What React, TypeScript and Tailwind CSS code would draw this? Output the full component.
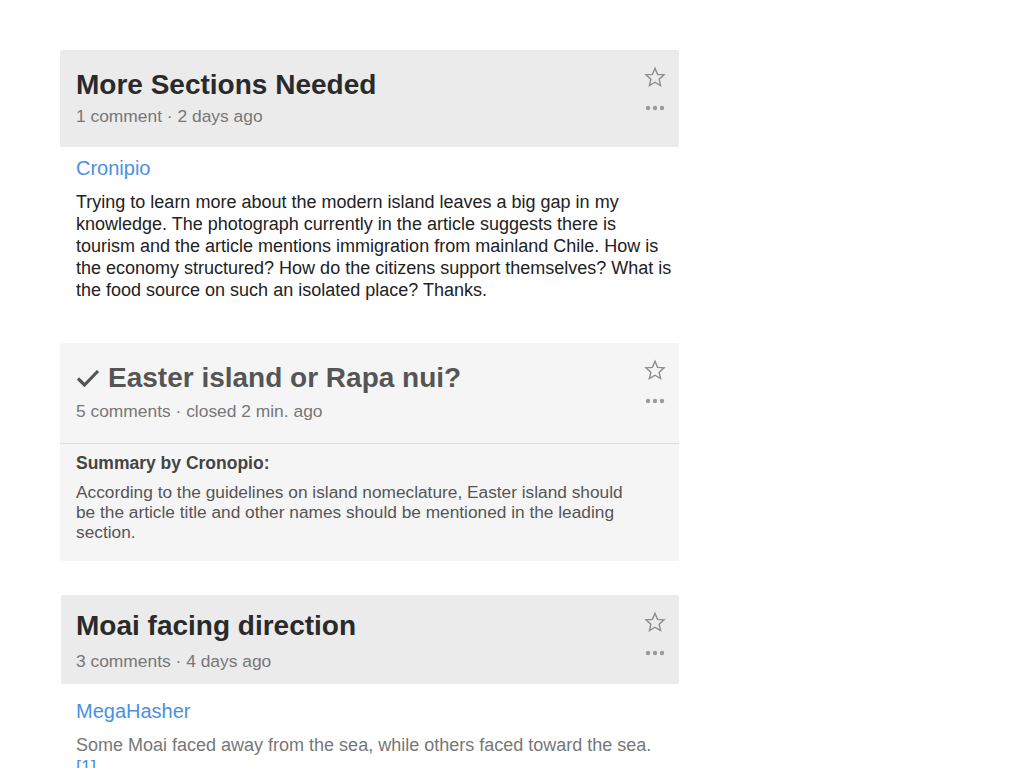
import React from 'react';

function Star() {
  return (
    <svg width="22" height="22" viewBox="0 0 24 24" fill="none" stroke="#8c8c8c" strokeWidth="1.5" strokeLinejoin="miter">
      <path d="M12 2.5l2.8 6.6 7.1.6-5.4 4.7 1.6 7-6.1-3.7-6.1 3.7 1.6-7-5.4-4.7 7.1-.6z" />
    </svg>
  );
}

function Dots() {
  return (
    <svg width="20" height="6" viewBox="0 0 20 6" fill="#9a9a9a">
      <circle cx="3" cy="3" r="2.2" />
      <circle cx="10" cy="3" r="2.2" />
      <circle cx="17" cy="3" r="2.2" />
    </svg>
  );
}

function Actions() {
  return (
    <div className="absolute right-[13px] top-[16px] flex flex-col items-center">
      <Star />
      <div className="mt-[17px]">
        <Dots />
      </div>
    </div>
  );
}

export default function App() {
  return (
    <div className="min-h-screen bg-white pt-[50px] pl-[60px]" style={{ fontFamily: '"Liberation Sans", Arial, sans-serif' }}>
      <div className="w-[619px] flex flex-col">
        {/* card 1 */}
        <div>
          <div className="relative h-[97px] rounded-[2px] bg-[#ebebeb] pl-4 pt-[19px]">
            <h2 className="text-[28px] leading-[32px] font-bold text-[#2a2a2a]">More Sections Needed</h2>
            <p className="mt-[4px] text-[17.4px] leading-[22px] text-[#777]">1 comment · 2 days ago</p>
            <Actions />
          </div>
          <div className="pl-4 pr-[3px] pt-[9px]">
            <div className="text-[20px] leading-[24px] text-[#4a90e2]">Cronipio</div>
            <p className="mt-[11px] text-[18px] leading-[22px] text-[#222]">
              Trying to learn more about the modern island leaves a big gap in my knowledge. The photograph currently in
              the article suggests there is tourism and the article mentions immigration from mainland Chile. How is the
              economy structured? How do the citizens support themselves? What is the food source on such an isolated
              place? Thanks.
            </p>
          </div>
        </div>

        {/* card 2 */}
        <div className="mt-[42px] rounded-[2px] bg-[#f5f5f5]">
          <div className="relative h-[101px] border-b border-[#dcdcdc] pl-4 pt-[19px]">
            <h2 className="flex items-center text-[28px] leading-[32px] font-bold text-[#555]">
              <svg width="24" height="20" viewBox="0 0 24 20" fill="none" stroke="#555" strokeWidth="3.2" className="mr-[8px]">
                <path d="M2 10.5l6.5 6.5L22 3" />
              </svg>
              Easter island or Rapa nui?
            </h2>
            <p className="mt-[6px] text-[17.4px] leading-[22px] text-[#777]">5 comments · closed 2 min. ago</p>
            <Actions />
          </div>
          <div className="pl-4 pr-[40px] pt-[8px] pb-[19px]">
            <div className="text-[17.5px] leading-[22px] font-bold text-[#444]">Summary by Cronopio:</div>
            <p className="mt-[8px] text-[17.3px] leading-[20px] text-[#555]">
              According to the guidelines on island nomeclature, Easter island should be the article title and other
              names should be mentioned in the leading section.
            </p>
          </div>
        </div>

        {/* card 3 */}
        <div className="mt-[34px] ml-px">
          <div className="relative h-[89px] rounded-[2px] bg-[#ebebeb] pl-[15px] pt-[15px]">
            <h2 className="text-[28px] leading-[32px] font-bold text-[#2a2a2a]">Moai facing direction</h2>
            <p className="mt-[8px] text-[17.4px] leading-[22px] text-[#777]">3 comments · 4 days ago</p>
            <Actions />
          </div>
          <div className="pl-[15px] pr-[3px] pt-[15px]">
            <div className="text-[20px] leading-[24px] text-[#4a90e2]">MegaHasher</div>
            <p className="mt-[11px] text-[18px] leading-[22px] text-[#777]">
              Some Moai faced away from the sea, while others faced toward the sea.{' '}
              <span className="text-[#4a90e2]">[1]</span>
            </p>
          </div>
        </div>
      </div>
    </div>
  );
}
